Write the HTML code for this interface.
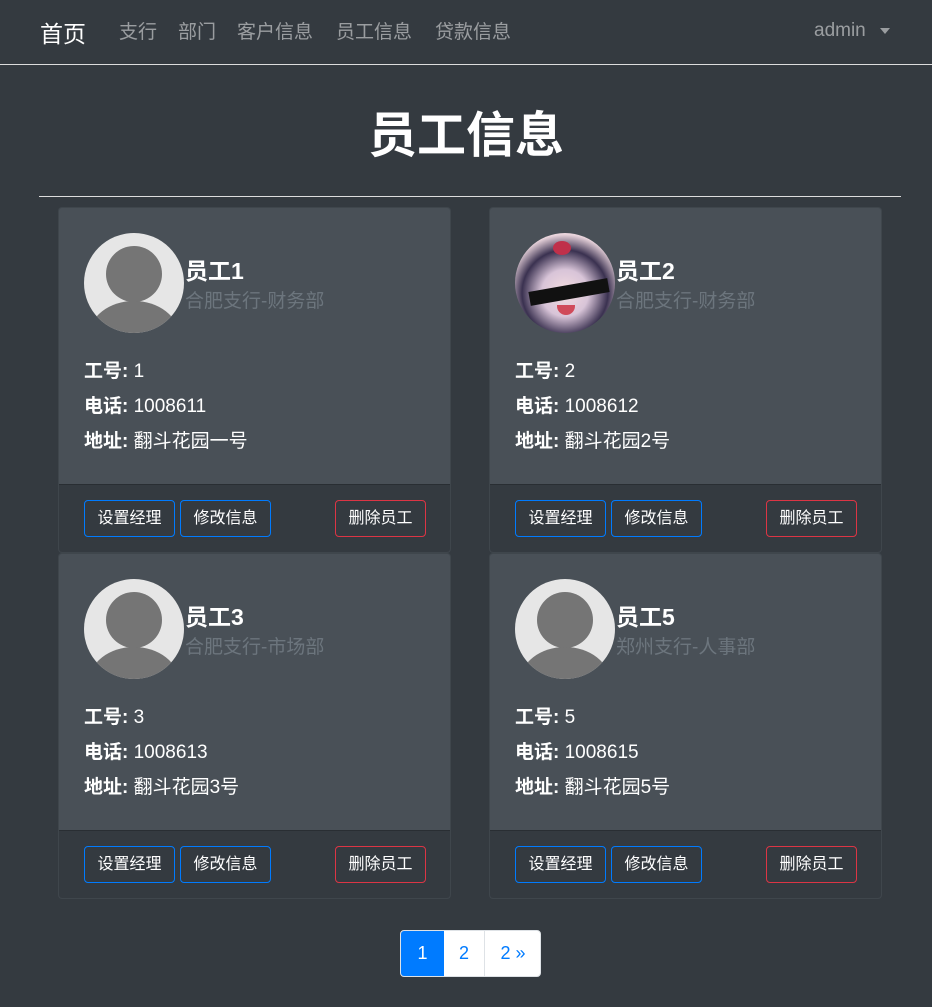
<!DOCTYPE html>
<html><head><meta charset="utf-8"><style>
*{box-sizing:border-box;margin:0;padding:0}
body{width:932px;height:1007px;background:#343a40;font-family:"Liberation Sans","Noto Sans CJK SC",sans-serif;color:#fff;position:relative;overflow:hidden}
.a{position:absolute;white-space:nowrap}
.nav{color:rgba(255,255,255,.5);font-size:19px;top:17px}
.card{position:absolute;width:393px;height:346px;background:#495057;border:1px solid rgba(0,0,0,.125);border-radius:4px;overflow:hidden}
.foot{position:absolute;left:0;right:0;top:276px;bottom:0;background:#343a40;border-top:1px solid rgba(0,0,0,.2)}
.av{position:absolute;left:25px;top:25px;width:100px;height:100px;border-radius:50%;overflow:hidden;background:#e6e6e6}
.name{position:absolute;left:126px;top:44px;font-size:23px;font-weight:bold}
.sub{position:absolute;left:126px;top:78px;font-size:19px;color:#6c757d}
.ln{position:absolute;left:25px;font-size:19px}
.btn{position:absolute;top:15px;height:37px;width:91px;border:1px solid #007bff;border-radius:4px;font-size:16px;text-align:center;line-height:35px;color:#fff}
.del{border-color:#dc3545}
</style></head><body>
<div class="a" style="left:40px;top:15px;font-size:23px;color:#fff">首页</div>
<div class="a nav" style="left:119px">支行</div>
<div class="a nav" style="left:178px">部门</div>
<div class="a nav" style="left:237px">客户信息</div>
<div class="a nav" style="left:336px">员工信息</div>
<div class="a nav" style="left:435px">贷款信息</div>
<div class="a nav" style="left:814px;top:20px;font-size:19px">admin</div>
<div class="a" style="left:880px;top:28px;width:0;height:0;border-left:5px solid transparent;border-right:5px solid transparent;border-top:6px solid rgba(255,255,255,.5)"></div>
<div class="a" style="left:0;top:64px;width:932px;height:1px;background:#ddd"></div>
<div class="a" style="left:0;width:932px;text-align:center;top:96px;font-size:49px;font-weight:bold">员工信息</div>
<div class="a" style="left:39px;top:196px;width:862px;height:1px;background:#ddd"></div>

<div class="card" style="left:58px;top:207px">
<div class="av"><div style="position:absolute;left:22px;top:13px;width:56px;height:56px;border-radius:50%;background:#757575"></div><div style="position:absolute;left:5px;top:68px;width:90px;height:70px;border-radius:50%;background:#757575"></div></div>
<div class="name">员工1</div><div class="sub">合肥支行-财务部</div>
<div class="ln" style="top:148px"><b>工号:</b> 1</div>
<div class="ln" style="top:183px"><b>电话:</b> 1008611</div>
<div class="ln" style="top:218px"><b>地址:</b> 翻斗花园一号</div>
<div class="foot"><div class="btn" style="left:25px">设置经理</div><div class="btn" style="left:121px">修改信息</div><div class="btn del" style="left:276px">删除员工</div></div>
</div>

<div class="card" style="left:489px;top:207px">
<div class="av" style="background:radial-gradient(circle at 50% 60%,#f4dde0 0,#d8c4d8 30%,#3a3150 55%,#e9d4dc 75%)"><div style="position:absolute;left:38px;top:8px;width:18px;height:14px;border-radius:50%;background:#c0304a"></div><div style="position:absolute;left:14px;top:52px;width:80px;height:14px;background:#111;transform:rotate(-10deg)"></div><div style="position:absolute;left:42px;top:72px;width:18px;height:10px;border-radius:0 0 9px 9px;background:#d04a5a"></div></div>
<div class="name">员工2</div><div class="sub">合肥支行-财务部</div>
<div class="ln" style="top:148px"><b>工号:</b> 2</div>
<div class="ln" style="top:183px"><b>电话:</b> 1008612</div>
<div class="ln" style="top:218px"><b>地址:</b> 翻斗花园2号</div>
<div class="foot"><div class="btn" style="left:25px">设置经理</div><div class="btn" style="left:121px">修改信息</div><div class="btn del" style="left:276px">删除员工</div></div>
</div>

<div class="card" style="left:58px;top:553px">
<div class="av"><div style="position:absolute;left:22px;top:13px;width:56px;height:56px;border-radius:50%;background:#757575"></div><div style="position:absolute;left:5px;top:68px;width:90px;height:70px;border-radius:50%;background:#757575"></div></div>
<div class="name">员工3</div><div class="sub">合肥支行-市场部</div>
<div class="ln" style="top:148px"><b>工号:</b> 3</div>
<div class="ln" style="top:183px"><b>电话:</b> 1008613</div>
<div class="ln" style="top:218px"><b>地址:</b> 翻斗花园3号</div>
<div class="foot"><div class="btn" style="left:25px">设置经理</div><div class="btn" style="left:121px">修改信息</div><div class="btn del" style="left:276px">删除员工</div></div>
</div>

<div class="card" style="left:489px;top:553px">
<div class="av"><div style="position:absolute;left:22px;top:13px;width:56px;height:56px;border-radius:50%;background:#757575"></div><div style="position:absolute;left:5px;top:68px;width:90px;height:70px;border-radius:50%;background:#757575"></div></div>
<div class="name">员工5</div><div class="sub">郑州支行-人事部</div>
<div class="ln" style="top:148px"><b>工号:</b> 5</div>
<div class="ln" style="top:183px"><b>电话:</b> 1008615</div>
<div class="ln" style="top:218px"><b>地址:</b> 翻斗花园5号</div>
<div class="foot"><div class="btn" style="left:25px">设置经理</div><div class="btn" style="left:121px">修改信息</div><div class="btn del" style="left:276px">删除员工</div></div>
</div>

<div class="a" style="left:400px;top:930px;width:141px;height:47px;background:#fff;border:1px solid #dee2e6;border-radius:4px;overflow:hidden;font-size:18px;color:#007bff">
<div class="a" style="left:0;top:0;width:43px;height:47px;background:#007bff;color:#fff;text-align:center;line-height:45px">1</div>
<div class="a" style="left:43px;top:0;width:41px;height:47px;border-right:1px solid #dee2e6;text-align:center;line-height:45px">2</div>
<div class="a" style="left:84px;top:0;width:56px;height:47px;text-align:center;line-height:45px">2 »</div>
</div>
</body></html>
